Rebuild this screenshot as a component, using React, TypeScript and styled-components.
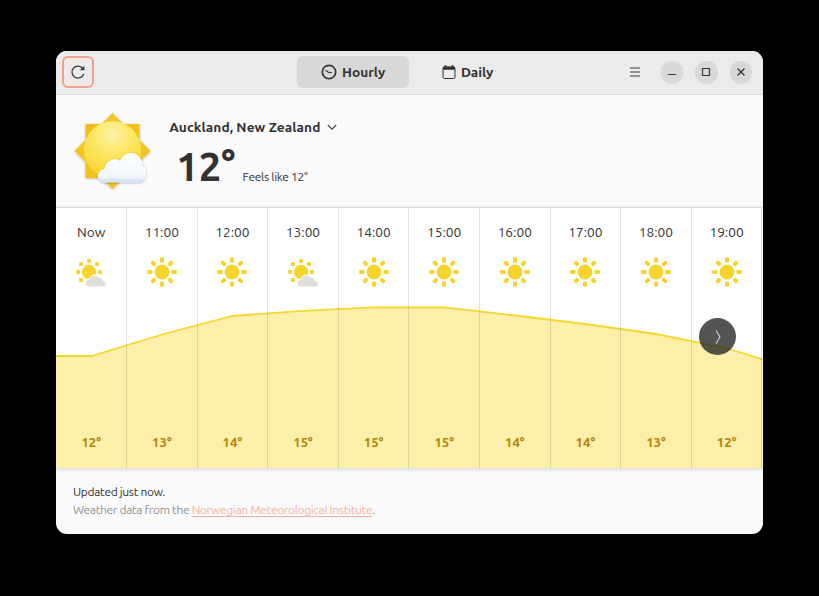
import React from 'react';
import styled, { createGlobalStyle } from 'styled-components';

const GlobalStyle = createGlobalStyle`
  * { box-sizing: border-box; }
  body { margin: 0; background: #000; overflow: hidden; font-family: Ubuntu, "Noto Sans", sans-serif; color: #323232; }
  svg { display: block; }
  button { font: inherit; color: inherit; border: 0; padding: 0; background: none; }
`;

const Desktop = styled.div`
  height: 596px;
  padding: 51px 56px 62px 56.4px;
  background: #000;
`;

const Window = styled.main`
  width: 706.2px;
  height: 483px;
  border-radius: 11px;
  overflow: hidden;
  background: #fafafa;
  display: flex;
  flex-direction: column;
`;

const HeaderBar = styled.header`
  height: 44px;
  flex: none;
  display: grid;
  grid-template-columns: 241px 1fr 191px;
  background: #ebebeb;
  border-bottom: 1px solid #dadada;
`;

const RefreshButton = styled.button`
  width: 32px;
  height: 32px;
  margin: 5px 0 0 5.6px;
  border: 2px solid #f2a188;
  border-radius: 6px;
  display: grid;
  place-items: center;
`;

const Switcher = styled.nav`
  display: flex;
  gap: 3px;
  padding-top: 5px;
`;

const Tab = styled.button<{ $active?: boolean }>`
  width: 111.5px;
  height: 32px;
  border-radius: 6px;
  display: flex;
  align-items: center;
  justify-content: center;
  gap: 5px;
  font-size: 13.7px;
  font-weight: 700;
  line-height: 18px;
  background: ${(p) => (p.$active ? '#d8d8d8' : 'transparent')};
`;

const Controls = styled.div`
  display: flex;
  align-items: flex-start;
  padding: 10px 0 0 49px;
  gap: 12px;
`;

const MenuButton = styled.button`
  width: 22px;
  height: 22px;
  flex: none;
  margin: 0 3px;
  display: grid;
  place-items: center;
`;

const WindowButton = styled.button`
  width: 22.5px;
  height: 22.5px;
  flex: none;
  border-radius: 50%;
  background: #d8d8d8;
  display: grid;
  place-items: center;
`;

const Summary = styled.section`
  height: 113px;
  flex: none;
  display: flex;
  border-bottom: 1px solid #e3e3e3;
`;

const SummaryIcon = styled.div`
  width: 112.8px;
  padding: 14.5px 0 0 15.4px;
`;

const SummaryText = styled.div`
  display: flex;
  flex-direction: column;
`;

const Location = styled.button`
  height: 20px;
  margin-top: 22px;
  display: flex;
  align-items: center;
  gap: 7px;
  font-size: 13.7px;
  font-weight: 700;
  line-height: 20px;
  letter-spacing: 0.06px;
`;

const Current = styled.div`
  display: flex;
  align-items: baseline;
  gap: 7px;
  margin: 12px 0 0 7px;
`;

const Temperature = styled.span`
  font-size: 40px;
  line-height: 36px;
  font-weight: 700;
`;

const FeelsLike = styled.span`
  font-size: 12px;
  letter-spacing: -0.3px;
`;

const Forecast = styled.section`
  position: relative;
  height: 259.5px;
  flex: none;
  background: #fff;
  box-shadow: 0 1px 4px rgba(0, 0, 0, 0.18);
`;

const Chart = styled.svg`
  position: absolute;
  inset: 0;
`;

const Hours = styled.div`
  position: relative;
  display: flex;
  height: 100%;
`;

const Hour = styled.div`
  width: 70.6px;
  flex: none;
  display: flex;
  flex-direction: column;
  align-items: center;
  border-right: 1px solid rgba(0, 0, 0, 0.11);
`;

const Time = styled.span`
  margin-top: 14px;
  font-size: 13.7px;
  line-height: 20px;
  margin-bottom: 14px;
`;

const Degrees = styled.span`
  margin: auto 0 15.5px;
  font-size: 13.2px;
  line-height: 20px;
  font-weight: 700;
  color: #b48405;
`;

const NextButton = styled.button`
  position: absolute;
  left: 642.6px;
  top: 110px;
  width: 37.4px;
  height: 37.4px;
  border-radius: 50%;
  background: rgba(36, 36, 36, 0.78);
  display: grid;
  place-items: center;
`;

const Footer = styled.footer`
  padding: 15.5px 16.6px;
  font-size: 12px;
  line-height: 18px;
`;

const Updated = styled.p`
  margin: 0;
  letter-spacing: -0.34px;
`;

const Credit = styled.p`
  margin: 0;
  color: #929292;
  letter-spacing: -0.34px;
`;

const Link = styled.a`
  color: #f3b29d;
  text-decoration: underline;
  text-underline-offset: 2px;
`;

const line =
  'M0 148H35.5L106 126.5L176.5 108L247 102.8L317.7 99.3H388.3L459 107.5L529.5 116L600 126L670 140L707 151.5';

const hours: { time: string; temp: number; cloudy?: boolean }[] = [
  { time: 'Now', temp: 12, cloudy: true },
  { time: '11:00', temp: 13 },
  { time: '12:00', temp: 14 },
  { time: '13:00', temp: 15, cloudy: true },
  { time: '14:00', temp: 15 },
  { time: '15:00', temp: 15 },
  { time: '16:00', temp: 14 },
  { time: '17:00', temp: 14 },
  { time: '18:00', temp: 13 },
  { time: '19:00', temp: 12 },
];

const SunIcon = () => (
  <svg width="32" height="32" viewBox="0 0 32 32" fill="#f6d32d">
    <circle cx="16" cy="16" r="7.4" />
    {[0, 45, 90, 135, 180, 225, 270, 315].map((a) => (
      <rect key={a} x="14" y="1.2" width="4" height="5.4" rx="1.2" transform={`rotate(${a} 16 16)`} />
    ))}
  </svg>
);

const SunCloudIcon = () => (
  <svg width="32" height="32" viewBox="0 0 32 32" fill="#f6d32d">
    <circle cx="14" cy="16" r="7.2" />
    {[[14, 5], [6, 8], [22, 8], [3, 16], [25, 16], [6, 24]].map(([x, y]) => (
      <rect key={`${x}-${y}`} x={x - 2} y={y - 2} width="4" height="4" rx="1.3" />
    ))}
    <path
      d="M14.5 31C9 31 8.8 24 13.8 23.5C15 18.2 21 18.2 23 21.2C26 20.8 27.7 22.7 28 24.6C32.7 25.3 32 31 28 31Z"
      fill="#deddda"
      stroke="#fff"
      strokeWidth="1"
    />
  </svg>
);

const LargeSunIcon = () => (
  <svg width="84" height="84" viewBox="0 0 84 84">
    <defs>
      <radialGradient id="disc" cx="50%" cy="23%" r="76%">
        <stop offset="0" stopColor="#fff1ae" />
        <stop offset="0.4" stopColor="#fce969" />
        <stop offset="1" stopColor="#fad430" />
      </radialGradient>
      <linearGradient id="rays" x1="0" y1="0" x2="1" y2="1">
        <stop offset="0" stopColor="#f0bd13" />
        <stop offset="1" stopColor="#f5c211" />
      </linearGradient>
      <linearGradient id="cloud" x1="0" y1="0" x2="0" y2="1">
        <stop offset="0" stopColor="#fff" />
        <stop offset="0.84" stopColor="#f0f5fc" />
        <stop offset="0.9" stopColor="#d5e5f7" />
        <stop offset="1" stopColor="#d5e5f7" />
      </linearGradient>
      <filter id="shade" x="-20%" y="-20%" width="140%" height="150%">
        <feDropShadow dx="0" dy="0.6" stdDeviation="0.8" floodOpacity="0.3" />
      </filter>
    </defs>
    <g filter="url(#shade)">
      <path d="M13.5 14H67.5V68H13.5Z" fill="url(#rays)" />
      <path d="M40.5 3L78.5 41L40.5 79L2.5 41Z" fill="#f4c521" />
    </g>
    <circle cx="40.5" cy="40" r="28.8" fill="url(#disc)" />
    <path
      d="M33 72.5C23.5 72.5 23.7 60 32.5 59C33.5 50 43 47 48 51C53.5 39 69 40.5 71 56C76 58.5 75.5 72.5 65 72.5Z"
      fill="url(#cloud)"
      filter="url(#shade)"
    />
  </svg>
);

export default function App() {
  return (
    <>
      <GlobalStyle />
      <Desktop>
        <Window>
          <HeaderBar>
            <RefreshButton aria-label="Refresh">
              <svg width="16" height="16" viewBox="0 0 16 16" fill="none" stroke="#393939" strokeWidth="1.3">
                <path d="M12.9 4.6A6 6 0 1 0 13.7 10" />
                <path d="M14.4 1.8V6.2H9.8Z" fill="#393939" stroke="none" />
              </svg>
            </RefreshButton>
            <Switcher>
              <Tab $active>
                <svg width="16" height="16" viewBox="0 0 16 16" fill="none" stroke="#323232">
                  <circle cx="8" cy="8" r="6.7" strokeWidth="1.7" />
                  <path d="M4.5 6.2L8 8.7L11 8.5" strokeWidth="1.1" />
                </svg>
                Hourly
              </Tab>
              <Tab>
                <svg width="14" height="15" viewBox="0 0 14 15" fill="none" stroke="#323232">
                  <rect x="1" y="2" width="12" height="11.5" rx="1.5" />
                  <path d="M1 3.3H13" strokeWidth="3" />
                  <path d="M3.5 0.3V3M10.5 0.3V3" strokeWidth="1.8" />
                </svg>
                Daily
              </Tab>
            </Switcher>
            <Controls>
              <MenuButton aria-label="Menu">
                <svg width="10" height="10" viewBox="0 0 10 10" stroke="#3b3b3b" strokeWidth="1.1">
                  <path d="M0 1H10M0 5H10M0 9H10" />
                </svg>
              </MenuButton>
              <WindowButton aria-label="Minimize">
                <svg width="10" height="10" viewBox="0 0 10 10" stroke="#343434" strokeWidth="1.2">
                  <path d="M1.2 7.5H8.8" />
                </svg>
              </WindowButton>
              <WindowButton aria-label="Maximize">
                <svg width="10" height="10" viewBox="0 0 10 10" fill="none" stroke="#343434" strokeWidth="1.2">
                  <path d="M1.5 1.5H8.5V8.5H1.5Z" />
                </svg>
              </WindowButton>
              <WindowButton aria-label="Close">
                <svg width="10" height="10" viewBox="0 0 10 10" stroke="#343434" strokeWidth="1.3">
                  <path d="M1.5 1.5L8.5 8.5M8.5 1.5L1.5 8.5" />
                </svg>
              </WindowButton>
            </Controls>
          </HeaderBar>
          <Summary>
            <SummaryIcon>
              <LargeSunIcon />
            </SummaryIcon>
            <SummaryText>
              <Location>
                Auckland, New Zealand
                <svg width="10" height="7" viewBox="0 0 10 7" fill="none" stroke="#444" strokeWidth="1.1">
                  <path d="M0.8 1L5 5.2L9.2 1" />
                </svg>
              </Location>
              <Current>
                <Temperature>12°</Temperature>
                <FeelsLike>Feels like 12°</FeelsLike>
              </Current>
            </SummaryText>
          </Summary>
          <Forecast>
            <Chart width="707" height="260" viewBox="0 0 707 260">
              <path d={`${line}V260H0Z`} fill="#fbefaa" />
              <path d={line} fill="none" stroke="#f6d72f" strokeWidth="1.8" />
            </Chart>
            <Hours>
              {hours.map((h) => (
                <Hour key={h.time}>
                  <Time>{h.time}</Time>
                  {h.cloudy ? <SunCloudIcon /> : <SunIcon />}
                  <Degrees>{h.temp}°</Degrees>
                </Hour>
              ))}
            </Hours>
            <NextButton aria-label="Later hours">
              <svg width="8" height="16" viewBox="0 0 8 16" fill="none" stroke="#d5d5d5" strokeWidth="1.1">
                <path d="M2 1.5L6 8L2 14.5" />
              </svg>
            </NextButton>
          </Forecast>
          <Footer>
            <Updated>Updated just now.</Updated>
            <Credit>
              Weather data from the <Link>Norwegian Meteorological Institute</Link>.
            </Credit>
          </Footer>
        </Window>
      </Desktop>
    </>
  );
}
